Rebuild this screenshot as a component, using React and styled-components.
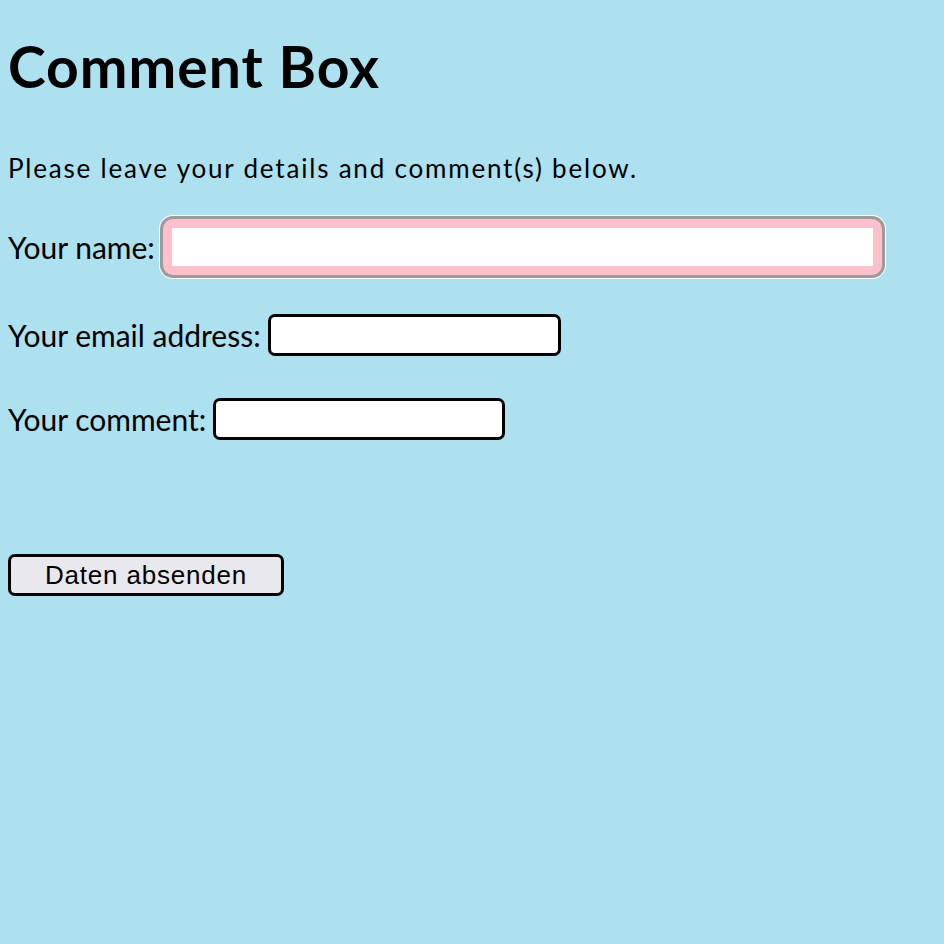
import React from "react";
import styled, { createGlobalStyle } from "styled-components";

const GlobalStyle = createGlobalStyle`
  html, body {
    background: #ade1f0;
  }
  body {
    margin: 8px;
    font-family: "Lato", "Open Sans", sans-serif;
    color: #000000;
  }
`;

const Page = styled.div`
  display: flex;
  flex-direction: column;
  align-items: flex-start;
`;

const Title = styled.h1`
  margin: 24px 0 0;
  font-size: 57px;
  line-height: 68px;
  font-weight: 700;
  letter-spacing: 1px;
`;

const Intro = styled.p`
  margin: 53px 0 0;
  font-size: 26px;
  line-height: 30px;
  letter-spacing: 1.8px;
`;

const Form = styled.form`
  display: flex;
  flex-direction: column;
  align-items: flex-start;
  margin: 0;
`;

const Row = styled.div`
  display: flex;
  align-items: center;
  gap: ${(p) => (p.$focused ? "8px" : "7px")};
  margin-top: ${(p) => p.$top}px;
`;

const Label = styled.label`
  font-size: 30px;
  line-height: 36px;
`;

const Field = styled.input`
  box-sizing: border-box;
  width: ${(p) => p.$width}px;
  height: ${(p) => (p.$focused ? 56 : 42)}px;
  margin: 0;
  padding: 0 6px;
  background: #ffffff;
  border: ${(p) => (p.$focused ? "9px solid #ffc0cb" : "3px solid #000000")};
  border-radius: ${(p) => (p.$focused ? "10px" : "7px")};
  box-shadow: ${(p) =>
    p.$focused ? "0 0 0 3px #9b9b9b, 0 0 0 4px #ffffff" : "none"};
  font: inherit;
  font-size: 20px;
  outline: none;
`;

const Submit = styled.button`
  box-sizing: border-box;
  width: 276px;
  height: 42px;
  margin-top: 114px;
  padding: 0;
  background: #e9e8ed;
  border: 3px solid #000000;
  border-radius: 7px;
  font-family: "Liberation Sans", Arial, sans-serif;
  font-size: 26px;
  letter-spacing: 0.8px;
  color: #000000;
`;

export default function App() {
  return (
    <>
      <GlobalStyle />
      <Page>
        <Title>Comment Box</Title>
        <Intro>Please leave your details and comment(s) below.</Intro>
        <Form onSubmit={(e) => e.preventDefault()}>
          <Row $top={36} $focused>
            <Label htmlFor="name">Your name:</Label>
            <Field id="name" type="text" $width={719} $focused />
          </Row>
          <Row $top={39}>
            <Label htmlFor="email">Your email address:</Label>
            <Field id="email" type="email" $width={293} />
          </Row>
          <Row $top={42}>
            <Label htmlFor="comment">Your comment:</Label>
            <Field id="comment" type="text" $width={292} />
          </Row>
          <Submit type="submit">Daten absenden</Submit>
        </Form>
      </Page>
    </>
  );
}
